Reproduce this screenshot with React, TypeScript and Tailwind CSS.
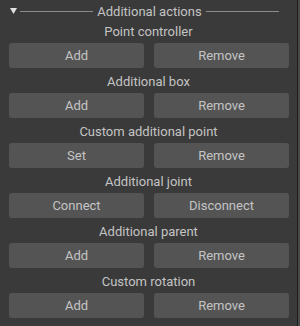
import React from 'react'

type Row = { label: string; left: string; right: string }

const rows: Row[] = [
  { label: 'Point controller', left: 'Add', right: 'Remove' },
  { label: 'Additional box', left: 'Add', right: 'Remove' },
  { label: 'Custom additional point', left: 'Set', right: 'Remove' },
  { label: 'Additional joint', left: 'Connect', right: 'Disconnect' },
  { label: 'Additional parent', left: 'Add', right: 'Remove' },
  { label: 'Custom rotation', left: 'Add', right: 'Remove' },
]

const Btn = ({ text }: { text: string }) => (
  <button className="h-[25px] rounded-[3px] bg-[#545454] text-[#c4c4c4] text-[13px] leading-none">{text}</button>
)

export default function App() {
  return (
    <div className="flex h-[326px] w-[300px] bg-[#3a3a3a] font-['Roboto',sans-serif]">
      <div className="w-[297px] flex flex-col">
        <div className="flex items-center h-[23px] pb-[1px] pl-[10px] pr-[18px] gap-[3px]">
          <svg width="7" height="6" viewBox="0 0 7 6" className="shrink-0">
            <path d="M0 0 H7 L3.5 6 Z" fill="#e0e0e0" />
          </svg>
          <div className="flex-1 h-px bg-[#8c8c8c]" />
          <span className="text-[13px] text-[#c4c4c4] leading-none px-[1px]">Additional actions</span>
          <div className="flex-1 h-px bg-[#8c8c8c]" />
        </div>
        {rows.map((r) => (
          <div key={r.label} className="flex flex-col">
            <div className="h-[20px] pb-[3px] flex items-center justify-center text-[13px] text-[#c4c4c4] leading-none">{r.label}</div>
            <div className="grid grid-cols-2 gap-[10px] px-[9px] pb-[5px] pr-[8px]">
              <Btn text={r.left} />
              <Btn text={r.right} />
            </div>
          </div>
        ))}
      </div>
      <div className="w-px bg-[#1c1c1c]" />
      <div className="flex-1 bg-[#4a4a4a]" />
    </div>
  )
}
